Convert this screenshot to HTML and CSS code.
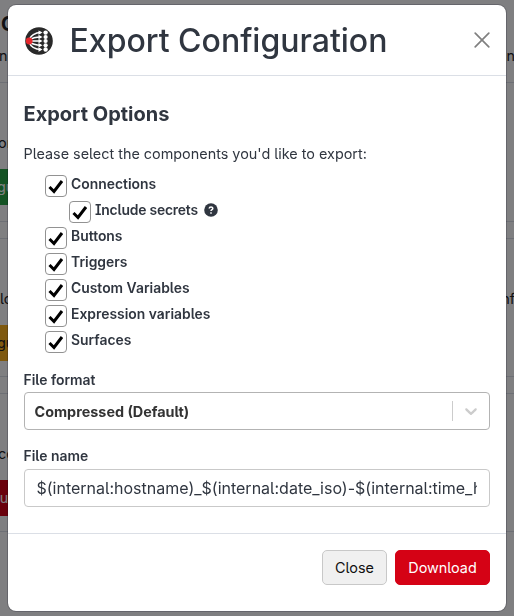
FILE: index.html
```html
<!DOCTYPE html>
<html lang="en">
<head>
<meta charset="utf-8">
<title>Export Configuration</title>
<link rel="stylesheet" href="styles.css">
</head>
<body>
<main class="page">
  <header class="page-head"><h1>C</h1><p><span>n</span><span>n</span></p></header>
  <section class="card"><p><span class="s1">or</span></p><div class="btn-back green">gu</div></section>
  <section class="card"><p><span class="s2">lo</span><span class="end">nf</span></p><div class="btn-back amber">gu</div></section>
  <section class="card"><p><span class="s3">co</span></p><div class="btn-back red">gu</div></section>
</main>
<div class="backdrop"></div>
<div class="modal" role="dialog">
  <header class="modal-head">
    <svg class="logo" viewBox="0 0 28 28">
      <circle cx="14" cy="14" r="13.800" fill="#292929"/>
      <g fill="none" stroke="#fff" stroke-width="1.500">
        <path d="M4 13C6 8 10 5.800 16 5.600M4 13.300C8 10.300 11 10 16 10M4 14H16M4 14.700C8 18 11 18.300 16 18.300M4 15.200C6 20 10 22.400 16 22.500"/>
      </g>
      <path fill="#fff" d="M13.500 3.400l4 2.200-4 2.200zM13.500 7.800l4 2.200-4 2.200zM13.500 11.800l4 2.200-4 2.200zM13.500 16.100l4 2.200-4 2.200zM13.500 20.300l4 2.200-4 2.200z"/>
      <g fill="#fff"><circle cx="20.600" cy="5.600" r="2.200"/><circle cx="20.600" cy="10" r="2.100"/><circle cx="20.600" cy="14" r="2.100"/><circle cx="20.600" cy="18.300" r="2.100"/><circle cx="20.600" cy="22.500" r="2.200"/></g>
      <circle cx="4.200" cy="14" r="3.400" fill="#e6262b"/>
    </svg>
    <h2>Export Configuration</h2>
    <svg class="close" viewBox="0 0 16 16"><path d="M1.200 1.200l13.600 13.600M14.800 1.200L1.200 14.800"/></svg>
  </header>
  <div class="modal-body">
    <h3>Export Options</h3>
    <p class="intro">Please select the components you'd like to export:</p>
    <div class="checks">
      <label><input type="checkbox" checked><span>Connections</span></label>
      <label class="nested"><input type="checkbox" checked><span>Include secrets</span>
        <svg class="help" viewBox="0 0 14 14"><circle cx="7" cy="7" r="6.800"/><path d="M5.200 5.500C5.300 3.400 8.800 3.400 8.800 5.400C8.800 6.700 7 6.700 7 8.100M7 9.300V10.700"/></svg></label>
      <label><input type="checkbox" checked><span>Buttons</span></label>
      <label><input type="checkbox" checked><span>Triggers</span></label>
      <label><input type="checkbox" checked><span>Custom Variables</span></label>
      <label><input type="checkbox" checked><span>Expression variables</span></label>
      <label><input type="checkbox" checked><span>Surfaces</span></label>
    </div>
    <div class="field-label">File format</div>
    <div class="select"><span>Compressed (Default)</span><i></i>
      <svg viewBox="0 0 20 20"><path d="M4.516 7.548c0.436-0.446 1.043-0.481 1.576 0l3.908 3.747 3.908-3.747c0.533-0.481 1.141-0.446 1.574 0 0.436 0.445 0.408 1.197 0 1.615-0.406 0.418-4.695 4.502-4.695 4.502-0.217 0.223-0.502 0.335-0.787 0.335s-0.570-0.112-0.789-0.335c0 0-4.287-4.084-4.695-4.502s-0.436-1.170 0-1.615z"/></svg></div>
    <div class="field-label name">File name</div>
    <div class="input"><span>$(internal:hostname)_$(internal:date_iso)-$(internal:time_hm)</span></div>
  </div>
  <footer class="modal-foot"><button>Close</button><button class="primary">Download</button></footer>
</div>
</body>
</html>
```
FILE: styles.css
```css
* { box-sizing: border-box; }
body {
  margin: 0; height: 616px; overflow: hidden; background: #fff; color: #303640;
  font: 16px/24px Inter, sans-serif; font-feature-settings: "ss02";
}
h1, h2, h3, p { margin: 0; }
.page { color: #222; font-size: 14.400px; }
.page-head { height: 83px; border-bottom: 1px solid #dbdfe6; padding-top: 8px; }
.page-head h1 { font-size: 20px; line-height: 32px; margin-left: 1px; }
.page-head p { display: flex; justify-content: space-between; padding-top: 4px; margin: 0 -1px; }
.card { height: 139px; margin-bottom: 16px; border-bottom: 1px solid #dbdfe6; padding-top: 48px; }
.card + .card { border-top: 1px solid #dbdfe6; margin-top: 16px; }
.card p { display: flex; justify-content: space-between; height: 38px; margin-left: -2px; }
.card .s2 { margin-left: 2px; }
.card .end { margin-right: -1px; }
.btn-back { height: 36px; line-height: 36px; width: 200px; text-indent: -3px; color: #fff; }
.green { background: #28a745; }
.amber { background: #ffb31a; color: #222; }
.red { background: #d50215; text-indent: -9px; }
.backdrop { position: fixed; inset: 0; background: rgba(0, 0, 4, .5); }
.modal {
  position: absolute; left: 7px; top: 4px; width: 500px; height: 608px;
  display: flex; flex-direction: column; background: #fff; background-clip: padding-box;
  border: 1px solid rgba(0, 0, 21, .2); border-radius: 9px; overflow: hidden;
}
.modal-head { display: flex; align-items: center; height: 71px; padding: 0 16px; border-bottom: 1px solid #dbdfe6; }
.logo { width: 28px; height: 28px; margin: 2px 0 0 1px; }
.modal-head h2 { margin: 2px 0 0 16.500px; font-size: 32px; line-height: 42px; font-weight: 500; white-space: nowrap; }
.close { width: 16px; height: 16px; margin-left: auto; stroke: #808080; stroke-width: 1.700; fill: none; stroke-linecap: round; }
.modal-body { flex: 1; padding: 26px 16px 0; }
h3 { font-size: 20px; line-height: 24px; font-weight: 700; margin-left: -.5px; }
.intro { font-size: 14.400px; margin: 16px 0 0 -.5px; line-height: 24px; }
.checks { padding: 6px 0 0 21px; }
.checks label { display: flex; align-items: flex-start; height: 26px; font-size: 13.900px; line-height: 24px; font-weight: 600; }
.checks .nested { padding-left: 24px; }
.nested span { letter-spacing: -.2px; }
.checks input {
  appearance: none; flex: none; width: 22px; height: 22px; margin: 3px 4px 0 0; border: 1px solid #929292; border-radius: 4px;
  background: url("data:image/svg+xml,%3Csvg xmlns='http://www.w3.org/2000/svg' viewBox='0 0 20 20'%3E%3Cpath d='M3.500 11L8 15.500L16 5' fill='none' stroke='%23000' stroke-width='3'/%3E%3C/svg%3E") center / 20px 20px;
}
.help { width: 14px; height: 14px; margin: 5px 0 0 6.500px; fill: #303640; }
.help path { fill: none; stroke: #fff; stroke-width: 1.500; }
.field-label { font-size: 13.900px; line-height: 24px; font-weight: 600; margin: 14px 0 0 -.5px; }
.select { display: flex; align-items: center; height: 38px; border: 1px solid #b3b3b3; border-radius: 4px; padding: 0 8px 0 10px; font-size: 14.400px; font-weight: 700; color: #333; }
.select span { margin: 1px 0 0 -.5px; }
.select i { width: 1px; height: 20px; margin-left: auto; background: #ccc; }
.select svg { width: 20px; height: 20px; margin-left: 8px; fill: #ccc; }
.input { height: 38px; margin-top: 1px; border: 1px solid #c9c9c9; border-radius: 4px; padding: 6px 12px; line-height: 24px; }
.input span { display: block; overflow: hidden; white-space: nowrap; text-indent: -.5px; }
.modal-foot { display: flex; justify-content: flex-end; gap: 8px; height: 78px; padding: 16px 16px 0; border-top: 1px solid #dbdfe6; }
button { height: 35px; width: 65px; padding: 0; border: 1px solid #c8c8c8; border-radius: 5px; background: #f0f0f0; color: #111; font: inherit; font-size: 14.400px; font-feature-settings: inherit; }
button.primary { width: 95px; border-color: #d50215; background: #d50215; color: #fff; }
```
